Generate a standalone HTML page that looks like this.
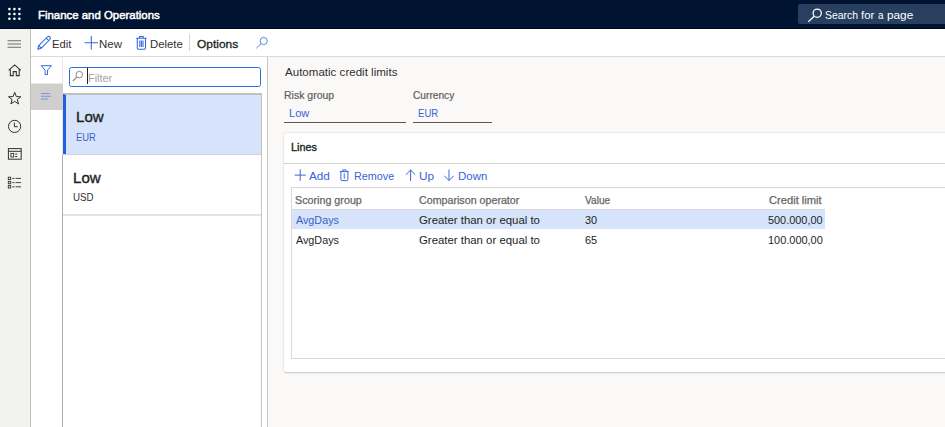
<!DOCTYPE html>
<html>
<head>
<meta charset="utf-8">
<style>
*{box-sizing:border-box;margin:0;padding:0}
html,body{width:945px;height:427px;overflow:hidden;background:#faf9f8;font-family:"Liberation Sans",sans-serif;font-size:12px;color:#323130}
.a{position:absolute}
.t{position:absolute;white-space:nowrap;transform-origin:0 0}
svg{position:absolute;overflow:visible}
#hdr{left:0;top:0;width:945px;height:29px;background:#001431;border-bottom:1px solid #000a22}
#search{left:798px;top:4px;width:147px;height:20px;background:#293f5f;border-radius:2px 0 0 2px}
#nav{left:0;top:29px;width:31px;height:398px;background:#f2f2f1;border-right:1px solid #c2beba}
#abar{left:31px;top:29px;width:914px;height:28px;background:#fff;border-bottom:1px solid #dddbd9}
#absep{left:189px;top:34px;width:1px;height:17px;background:#d8d6d4}
#fcol{left:31px;top:57px;width:32px;height:370px;background:#fff;border-right:1px solid #e8e6e4}
#lb{left:62px;top:155px;width:1px;height:272px;background:#b0aeac}
#fsel{left:31px;top:84px;width:32px;height:26px;background:#d1cfcd}
#lpane{left:63px;top:57px;width:205px;height:370px;background:#fff;border-right:1px solid #c8c4c1}
#finput{left:69px;top:67px;width:192px;height:20px;border:1px solid #2b6be4;border-radius:2.5px;background:#fff}
#fcur{left:87px;top:68px;width:1px;height:16px;background:#222}
#litems{left:63px;top:93px;width:199px;height:334px;border-top:1px solid #c2c0be;border-right:1px solid #c8c4c1}
#it1{left:63px;top:94px;width:198px;height:60px;background:#d6e3fa;border-left:3px solid #1f5fe0;border-top:1px solid #c2c0be}
#it1b{left:63px;top:154px;width:198px;height:1px;background:#cfd4dc}
#it2b{left:63px;top:214px;width:198px;height:2px;background:#e3e2e1}
.ul{height:1px;background:#5a5856}
#card{left:284px;top:133px;width:663px;height:239px;background:#fff;border-radius:2px;box-shadow:0 0.5px 2px rgba(0,0,0,.22)}
#cardsep{left:284px;top:163px;width:661px;height:1px;background:#d4d2d0}
#grid{left:291px;top:187px;width:654px;height:172px;border:1px solid #dbd9d7;border-right:none;background:#fff}
#ghb{left:292px;top:209px;width:533px;height:1px;background:#d9d8d8}
#rowsel{left:292px;top:210px;width:533px;height:19px;background:#d6e3fa}
</style>
</head>
<body>
<div id="hdr" class="a"></div>
<svg style="left:6px;top:6px" width="18" height="18" viewBox="0 0 18 18"><g fill="#fff"><circle cx="3.4" cy="3.1" r="1.3"/><circle cx="8.4" cy="3.1" r="1.3"/><circle cx="13.4" cy="3.1" r="1.3"/><circle cx="3.4" cy="8" r="1.3"/><circle cx="8.4" cy="8" r="1.3"/><circle cx="13.4" cy="8" r="1.3"/><circle cx="3.4" cy="12.8" r="1.3"/><circle cx="8.4" cy="12.8" r="1.3"/><circle cx="13.4" cy="12.8" r="1.3"/></g></svg>
<div id="search" class="a"></div>
<svg style="left:806px;top:6px" width="18" height="18" viewBox="0 0 18 18"><circle cx="11.2" cy="7.2" r="4.1" fill="none" stroke="#fff" stroke-width="1.25"/><path d="M8.2 10.2 L2.3 15.8" stroke="#fff" stroke-width="1.3" fill="none"/></svg>

<div id="nav" class="a"></div>
<!-- hamburger -->
<svg style="left:7px;top:39px" width="16" height="10" viewBox="0 0 16 10"><path d="M0.5 1.8H14M0.5 5H14M0.5 8.2H14" stroke="#6f6d6b" stroke-width="1.1" fill="none"/></svg>
<!-- home -->
<svg style="left:7px;top:63px" width="16" height="14" viewBox="0 0 16 14"><path d="M1.6 7.3 L7.7 1.9 L13.8 7.3 M3.3 6.2 V12.6 H6.2 V8.6 H9.3 V12.6 H12.2 V6.2" stroke="#323130" stroke-width="1.05" fill="none" stroke-linejoin="miter"/></svg>
<!-- star -->
<svg style="left:7px;top:91px" width="16" height="14" viewBox="0 0 16 14"><path d="M7.7 1.3 L9.35 5.6 L13.9 5.75 L10.3 8.55 L11.55 12.95 L7.7 10.4 L3.85 12.95 L5.1 8.55 L1.5 5.75 L6.05 5.6 Z" stroke="#323130" stroke-width="1" fill="none" stroke-linejoin="miter"/></svg>
<!-- clock -->
<svg style="left:7px;top:119px" width="16" height="16" viewBox="0 0 16 16"><circle cx="7.6" cy="7.4" r="6.1" stroke="#323130" stroke-width="1" fill="none"/><path d="M7.4 3.6 V7.7 H10.8" stroke="#323130" stroke-width="1" fill="none"/></svg>
<!-- workspace -->
<svg style="left:7px;top:147px" width="16" height="14" viewBox="0 0 16 14"><rect x="1.4" y="1.6" width="12.8" height="10.6" stroke="#323130" stroke-width="1" fill="none"/><path d="M1.4 4.3 H14.2" stroke="#323130" stroke-width="1" fill="none"/><rect x="3.9" y="6.4" width="2.8" height="3.6" stroke="#323130" stroke-width="0.9" fill="none"/><path d="M8.2 7 H10.3 M8.2 9.5 H10.3" stroke="#323130" stroke-width="1" fill="none"/></svg>
<!-- list -->
<svg style="left:7px;top:176px" width="16" height="14" viewBox="0 0 16 14"><g stroke="#323130" stroke-width="0.9" fill="none"><rect x="1.3" y="1.2" width="2.4" height="2.4"/><rect x="1.3" y="5.4" width="2.4" height="2.4"/><rect x="1.3" y="9.6" width="2.4" height="2.4"/><path d="M5.3 2.4 H7.6 M8.6 2.4 H14 M5.3 6.6 H7.6 M8.6 6.6 H14 M5.3 10.8 H7.6 M8.6 10.8 H14"/></g></svg>

<div id="abar" class="a"></div>
<div id="absep" class="a"></div>
<!-- pencil -->
<svg style="left:36px;top:34px" width="17" height="17" viewBox="0 0 17 17"><path d="M1.8 15.2 L2.7 11.6 L11.3 3 A1.75 1.75 0 0 1 13.9 5.5 L5.3 14.2 Z M2.7 11.6 L5.3 14.2 M10.2 4.1 L12.8 6.7" stroke="#2f64e0" stroke-width="1.05" fill="none" stroke-linejoin="round"/></svg>
<!-- plus -->
<svg style="left:84px;top:35px" width="15" height="15" viewBox="0 0 15 15"><path d="M7.3 1 V14.6 M0.6 7.7 H14" stroke="#3a66dc" stroke-width="1.05" fill="none"/></svg>
<!-- trash -->
<svg style="left:135px;top:35px" width="13" height="15" viewBox="0 0 13 15"><path d="M1.2 3.2 H11.6 M4.6 3 V1.4 H8.2 V3 M2.3 3.3 V13.1 Q2.3 14.3 3.5 14.3 H9.3 Q10.5 14.3 10.5 13.1 V3.3 M4.8 5.5 V12 M6.4 5.5 V12 M8 5.5 V12" stroke="#2f64e0" stroke-width="1.05" fill="none"/></svg>
<!-- search abar -->
<svg style="left:255px;top:36px" width="14" height="13" viewBox="0 0 14 13"><circle cx="8.7" cy="5" r="3.6" fill="none" stroke="#5078e6" stroke-width="0.9"/><path d="M6 7.7 L1.4 12.2" stroke="#5078e6" stroke-width="0.95" fill="none"/></svg>

<div id="fcol" class="a"></div>
<div id="fsel" class="a"></div><div class="a" style="left:31px;top:83px;width:32px;height:1px;background:#e9e8e7"></div>
<div id="lb" class="a"></div>
<!-- funnel -->
<svg style="left:40px;top:64px" width="13" height="12" viewBox="0 0 13 12"><path d="M1.2 1.7 H11.4 L7.5 6.2 V10.6 H5.1 V6.2 Z" stroke="#3a66dc" stroke-width="1" fill="none" stroke-linejoin="round"/></svg>
<!-- lines -->
<svg style="left:40px;top:92px" width="13" height="9" viewBox="0 0 13 9"><path d="M1 1.4 H9.8 M1 4.2 H11.2 M1 7 H7.8" stroke="#7b95e4" stroke-width="1.05" fill="none"/></svg>

<div id="lpane" class="a"></div>
<div id="finput" class="a"></div>
<svg style="left:71px;top:69px" width="14" height="14" viewBox="0 0 14 14"><circle cx="8.3" cy="5.65" r="3.3" fill="none" stroke="#8a8886" stroke-width="1"/><path d="M5.8 8.1 L1.8 12" stroke="#8a8886" stroke-width="1.05" fill="none"/></svg>
<div id="fcur" class="a"></div>
<div id="litems" class="a"></div>
<div id="it1" class="a"></div>
<div id="it1b" class="a"></div>
<div id="it2b" class="a"></div>

<div class="a ul" style="left:284px;top:122px;width:122px"></div>
<div class="a ul" style="left:413px;top:122px;width:79px"></div>

<div id="card" class="a"></div>
<div id="cardsep" class="a"></div>
<!-- toolbar icons -->
<svg style="left:294px;top:169px" width="13" height="13" viewBox="0 0 13 13"><path d="M6.2 0.4 V11.8 M0.6 6.1 H11.8" stroke="#3a66dc" stroke-width="1" fill="none"/></svg>
<svg style="left:339px;top:169px" width="11" height="13" viewBox="0 0 11 13"><path d="M0.9 2.6 H9.9 M3.8 2.4 V0.9 H7 V2.4 M1.9 2.7 V10.6 Q1.9 11.6 2.9 11.6 H7.9 Q8.9 11.6 8.9 10.6 V2.7 " stroke="#3a66dc" stroke-width="1" fill="none"/><path d="M5.4 4.4 V9.8" stroke="#7f98e6" stroke-width="1.5" fill="none"/></svg>
<svg style="left:405px;top:169px" width="12" height="13" viewBox="0 0 12 13"><path d="M5.6 12 V1 M0.9 5.7 L5.6 1 L10.3 5.7" stroke="#3a66dc" stroke-width="1" fill="none"/></svg>
<svg style="left:443px;top:169px" width="12" height="13" viewBox="0 0 12 13"><path d="M6 0.5 V11.5 M1.3 6.8 L6 11.5 L10.7 6.8" stroke="#3a66dc" stroke-width="1" fill="none"/></svg>

<div id="grid" class="a"></div>
<div id="ghb" class="a"></div>
<div id="rowsel" class="a"></div>
<div id="t1" class="t" style="left:37.89px;top:7.58px;font-size:11.6px;line-height:14px;-webkit-text-stroke:0.5px #ffffff;color:#ffffff;transform:scaleX(0.9837)">Finance and Operations</div>
<div id="t2" class="t" style="left:825.24px;top:7.58px;font-size:11.6px;line-height:14px;color:#ffffff;transform:scaleX(0.8989)">Search</div>
<div id="t2b" class="t" style="left:861.18px;top:7.58px;font-size:11.6px;line-height:14px;color:#ffffff;transform:scaleX(0.9811)">for</div>
<div id="t2c" class="t" style="left:878.18px;top:7.58px;font-size:11.6px;line-height:14px;color:#ffffff;transform:scaleX(0.8500)">a</div>
<div id="t2d" class="t" style="left:886.54px;top:7.58px;font-size:11.6px;line-height:14px;color:#ffffff;transform:scaleX(1.0163)">page</div>
<div id="t3" class="t" style="left:51.89px;top:36.96px;font-size:10.8px;line-height:14px;color:#323130;transform:scaleX(1.0383)">Edit</div>
<div id="t4" class="t" style="left:98.77px;top:36.96px;font-size:10.8px;line-height:14px;color:#323130;transform:scaleX(1.0602)">New</div>
<div id="t5" class="t" style="left:149.68px;top:36.96px;font-size:10.8px;line-height:14px;color:#323130;transform:scaleX(1.0510)">Delete</div>
<div id="t6" class="t" style="left:196.98px;top:36.96px;font-size:10.8px;line-height:14px;-webkit-text-stroke:0.3px #201f1e;color:#201f1e;transform:scaleX(1.1085)">Options</div>
<div id="t7" class="t" style="left:87.72px;top:71.06px;font-size:10.8px;line-height:14px;color:#a6a4a2;transform:scaleX(1.0087)">Filter</div>
<div id="t8" class="t" style="left:76.26px;top:108.38px;font-size:14.5px;line-height:18px;-webkit-text-stroke:0.35px #201f1e;color:#201f1e;transform:scaleX(1.0396)">Low</div>
<div id="t9" class="t" style="left:76.24px;top:130.06px;font-size:10.8px;line-height:14px;color:#3a62c8;transform:scaleX(0.8702)">EUR</div>
<div id="t10" class="t" style="left:73.26px;top:168.88px;font-size:14.5px;line-height:18px;-webkit-text-stroke:0.35px #201f1e;color:#201f1e;transform:scaleX(1.0396)">Low</div>
<div id="t11" class="t" style="left:73.32px;top:190.06px;font-size:10.8px;line-height:14px;color:#323130;transform:scaleX(0.9023)">USD</div>
<div id="t12" class="t" style="left:285.17px;top:65.06px;font-size:10.8px;line-height:14px;color:#323130;transform:scaleX(1.0708)">Automatic credit limits</div>
<div id="t13" class="t" style="left:284.16px;top:88.67px;font-size:10.2px;line-height:13px;-webkit-text-stroke:0.2px #605e5c;color:#605e5c;transform:scaleX(1.0304)">Risk group</div>
<div id="t14" class="t" style="left:288.86px;top:105.72px;font-size:11.5px;line-height:14px;color:#3a62d8;transform:scaleX(0.9630)">Low</div>
<div id="t15" class="t" style="left:413.33px;top:88.67px;font-size:10.2px;line-height:13px;-webkit-text-stroke:0.2px #605e5c;color:#605e5c;transform:scaleX(0.9976)">Currency</div>
<div id="t16" class="t" style="left:418.07px;top:105.72px;font-size:11.5px;line-height:14px;color:#3a62d8;transform:scaleX(0.8352)">EUR</div>
<div id="t17" class="t" style="left:290.77px;top:140.16px;font-size:10.8px;line-height:14px;-webkit-text-stroke:0.35px #201f1e;color:#201f1e;transform:scaleX(1.0040)">Lines</div>
<div id="t18" class="t" style="left:309.06px;top:168.96px;font-size:10.8px;line-height:14px;color:#3a62d8;transform:scaleX(1.0830)">Add</div>
<div id="t19" class="t" style="left:353.62px;top:168.96px;font-size:10.8px;line-height:14px;color:#3a62d8;transform:scaleX(1.0006)">Remove</div>
<div id="t20" class="t" style="left:419.18px;top:168.96px;font-size:10.8px;line-height:14px;color:#3a62d8;transform:scaleX(1.0931)">Up</div>
<div id="t21" class="t" style="left:457.87px;top:168.96px;font-size:10.8px;line-height:14px;color:#3a62d8;transform:scaleX(1.0641)">Down</div>
<div id="t22" class="t" style="left:295.40px;top:193.67px;font-size:10.2px;line-height:13px;-webkit-text-stroke:0.25px #686664;color:#686664;transform:scaleX(1.0534)">Scoring group</div>
<div id="t23" class="t" style="left:418.81px;top:193.67px;font-size:10.2px;line-height:13px;-webkit-text-stroke:0.25px #686664;color:#686664;transform:scaleX(1.0485)">Comparison operator</div>
<div id="t24" class="t" style="left:585.32px;top:193.67px;font-size:10.2px;line-height:13px;-webkit-text-stroke:0.25px #686664;color:#686664;transform:scaleX(0.9950)">Value</div>
<div id="t25" class="t" style="left:769.29px;top:193.67px;font-size:10.2px;line-height:13px;-webkit-text-stroke:0.25px #686664;color:#686664;transform:scaleX(1.0945)">Credit limit</div>
<div id="t26" class="t" style="left:295.68px;top:212.86px;font-size:10.8px;line-height:14px;color:#3a62c8;transform:scaleX(0.9976)">AvgDays</div>
<div id="t27" class="t" style="left:418.67px;top:212.86px;font-size:10.8px;line-height:14px;color:#201f1e;transform:scaleX(1.0549)">Greater than or equal to</div>
<div id="t28" class="t" style="left:584.69px;top:212.86px;font-size:10.8px;line-height:14px;color:#201f1e;transform:scaleX(1.0157)">30</div>
<div id="t29" class="t" style="left:768.00px;top:212.86px;font-size:10.8px;line-height:14px;color:#201f1e;transform:scaleX(1.0089)">500.000,00</div>
<div id="t30" class="t" style="left:295.68px;top:232.76px;font-size:10.8px;line-height:14px;color:#201f1e;transform:scaleX(0.9976)">AvgDays</div>
<div id="t31" class="t" style="left:418.67px;top:232.76px;font-size:10.8px;line-height:14px;color:#201f1e;transform:scaleX(1.0549)">Greater than or equal to</div>
<div id="t32" class="t" style="left:584.69px;top:232.76px;font-size:10.8px;line-height:14px;color:#201f1e;transform:scaleX(1.0157)">65</div>
<div id="t33" class="t" style="left:767.74px;top:232.76px;font-size:10.8px;line-height:14px;color:#201f1e;transform:scaleX(1.0137)">100.000,00</div>
</body>
</html>
